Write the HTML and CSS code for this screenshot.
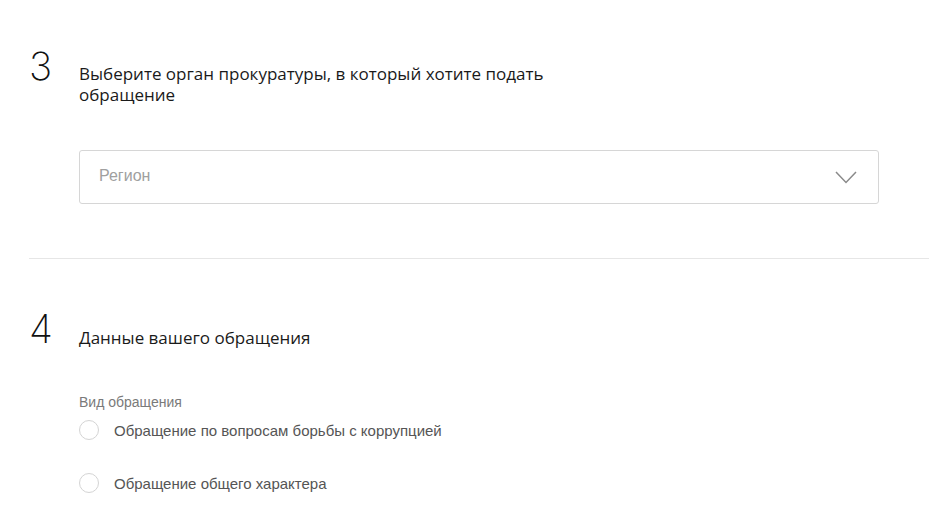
FILE: index.html
```html
<!DOCTYPE html>
<html lang="ru">
<head>
<meta charset="utf-8">
<link rel="stylesheet" href="styles.css">
</head>
<body>
<div class="page">
  <section class="step step-3">
    <div class="step-head">
      <div class="step-num">3</div>
      <h2 class="step-title">Выберите орган прокуратуры, в который хотите подать<br>обращение</h2>
    </div>
    <div class="step-body">
      <div class="select">
        <span class="select-placeholder">Регион</span>
        <svg class="chevron" width="22" height="13" viewBox="0 0 22 13"><path d="M1 1 L11 11.5 L21 1" fill="none" stroke="#8a8a8a" stroke-width="1.5"/></svg>
      </div>
    </div>
  </section>
  <hr class="divider">
  <section class="step step-4">
    <div class="step-head">
      <div class="step-num">4</div>
      <h2 class="step-title single">Данные вашего обращения</h2>
    </div>
    <div class="step-body">
      <div class="field-label">Вид обращения</div>
      <label class="radio"><span class="radio-circle"></span><span class="radio-text">Обращение по вопросам борьбы с коррупцией</span></label>
      <label class="radio"><span class="radio-circle"></span><span class="radio-text">Обращение общего характера</span></label>
    </div>
  </section>
</div>
</body>
</html>
```
FILE: styles.css
```css
html, body {
  margin: 0;
  padding: 0;
  background: #ffffff;
}
body {
  font-family: "Liberation Sans", Arial, sans-serif;
  color: #222;
}
.page {
  padding-left: 29px;
  width: 900px;
}
.step-head {
  display: flex;
  align-items: flex-start;
}
.step-num {
  width: 50px;
  flex: none;
  font-family: Inter, Lato, sans-serif;
  font-weight: 150;
  font-size: 39px;
  line-height: 39px;
  color: #111;
  box-sizing: border-box;
}
.step-title {
  margin: 0;
  font-family: "Open Sans", sans-serif;
  font-weight: 400;
  font-size: 17px;
  line-height: 21px;
  color: #1a1a1a;
}
.step-3 {
  padding-top: 46px;
  padding-bottom: 54px;
}
.step-3 .step-title {
  margin-top: 17px;
}
.step-body {
  padding-left: 50px;
}
.step-3 .step-body {
  padding-top: 45px;
}
.select {
  height: 52px;
  border: 1px solid #d6d6d6;
  border-radius: 3px;
  display: flex;
  align-items: center;
  justify-content: space-between;
  padding: 0 21px 0 19px;
  width: 758px;
}
.select-placeholder {
  font-size: 16px;
  color: #a0a0a0;
  margin-top: -3px;
}
.chevron {
  display: block;
  margin-top: 1px;
}
.divider {
  margin: 0;
  border: 0;
  height: 1px;
  background: #e6e6e6;
}
.step-4 {
  padding-top: 50px;
}
.step-4 .step-title {
  margin-top: 18px;
}
.step-4 .step-body {
  padding-top: 46px;
}
.field-label {
  font-size: 14px;
  line-height: 16px;
  color: #7a7a7a;
}
.radio {
  display: flex;
  align-items: center;
  height: 30px;
  margin-top: 5px;
}
.radio + .radio {
  margin-top: 23px;
}
.radio-circle {
  width: 18px;
  height: 18px;
  border: 1px solid #d4d4d4;
  border-radius: 50%;
  flex: none;
  margin-right: 15px;
}
.radio-text {
  font-size: 15px;
  color: #555;
}
```
